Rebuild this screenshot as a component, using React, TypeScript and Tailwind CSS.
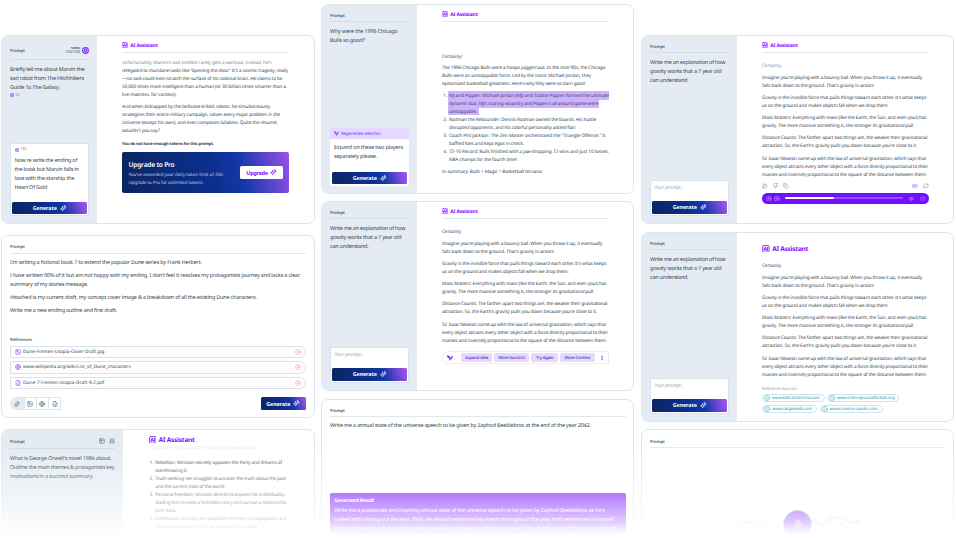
import React, { useLayoutEffect, useRef } from "react";
import {
  CircleX, Image as ImageIcon, Globe, FileDown, Paperclip, ThumbsUp, ThumbsDown, Copy, Volume2, RefreshCw,
  CirclePlay, CirclePause, PanelsTopLeft, SlidersVertical, Mic, Info, EllipsisVertical,
} from "lucide-react";

type Row = [string, number];

/* A single line of copy whose tracking is adjusted so that it fills a measure. */
function Fit({ t, w, className = "" }: { t: string; w: number; className?: string }) {
  const ref = useRef<HTMLSpanElement>(null);
  useLayoutEffect(() => {
    const el = ref.current;
    if (!el) return;
    el.style.letterSpacing = "0px";
    const natural = el.getBoundingClientRect().width;
    el.style.letterSpacing = `${(w - natural) / t.length}px`;
  }, [t, w]);
  return (
    <span ref={ref} className={`inline-block whitespace-nowrap ${className}`}>
      {t}
    </span>
  );
}

function Lines({ rows, className = "" }: { rows: Row[]; className?: string }) {
  return (
    <div className={className}>
      {rows.map(([t, w], i) => (
        <div key={i} className="flex h-[1lh] items-center">
          <Fit t={t} w={w} />
        </div>
      ))}
    </div>
  );
}

function Sparkle({ className = "" }: { className?: string }) {
  return (
    <svg viewBox="0 0 24 24" className={className} fill="none" stroke="currentColor" strokeWidth="2.4" strokeLinejoin="round" strokeLinecap="round">
      <path d="M9.5 6.5 11.4 12l5.6 2-5.6 2-1.9 5.5L7.6 16 2 14l5.6-2z" />
      <path d="M17 2v5M14.5 4.5h5M20.5 8v3.4M18.8 9.7h3.4" />
    </svg>
  );
}

function Wand({ className = "" }: { className?: string }) {
  return (
    <svg viewBox="0 0 24 24" className={className} fill="none" stroke="currentColor" strokeLinecap="round" strokeLinejoin="round">
      <path d="M2.5 3l6 2 1.5 6-6-2z" strokeWidth="3" fill="currentColor" />
      <path d="M9 10l2.5 11 2.5-6M12 12.5l8-4.5" strokeWidth="3.2" />
      <circle cx="20" cy="7.5" r="1.8" strokeWidth="2" />
      <circle cx="17.5" cy="15" r="1.2" strokeWidth="2" />
    </svg>
  );
}

function AiMark({ className = "" }: { className?: string }) {
  return (
    <svg viewBox="0 0 24 24" className={className} fill="none" stroke="currentColor" strokeWidth="2.2" strokeLinecap="round" strokeLinejoin="round">
      <rect x="1.5" y="1.5" width="21" height="21" rx="4" fill="#efe3ff" />
      <path d="M6 17l3.4-10h1.2L14 17M7.4 13.6h5.2M17.5 7v10" strokeWidth="2.5" />
    </svg>
  );
}

function TokenIcon({ className = "" }: { className?: string }) {
  return (
    <svg viewBox="0 0 24 24" className={className} fill="none" stroke="currentColor" strokeWidth="3.8">
      <circle cx="12" cy="12" r="9.8" />
      <rect x="8.5" y="8.5" width="7" height="7" rx="1.5" transform="rotate(45 12 12)" />
    </svg>
  );
}

function Generate({ className = "" }: { className?: string }) {
  return (
    <button
      className={`flex h-[12.5px] items-center justify-center gap-[3px] rounded-[1.5px] bg-[linear-gradient(70deg,#0b2560_0%,#0c2f8f_50%,#1238a8_68%,#9a52ea_96%)] text-[5.4px] leading-[8px] font-bold text-white ${className}`}
    >
      <Fit t="Generate" w={24} />
      <Sparkle className="size-[6.5px]" />
    </button>
  );
}

function Card({ className = "", children }: { className?: string; children: React.ReactNode }) {
  return <section className={`flex shrink-0 overflow-hidden rounded-[7px] border border-[#dce6ec] bg-white ${className}`}>{children}</section>;
}

function Label({ t = "Prompt", w = 14.5 }: { t?: string; w?: number }) {
  return (
    <div className="flex h-[6px] items-center pt-[2px] text-[4.2px] leading-[6px] font-semibold text-[#4a5c6c]">
      <Fit t={t} w={w} className="translate-y-[0.6px]" />
    </div>
  );
}

function Sidebar({ header, prompt, children, wide = false }: { header?: React.ReactNode; prompt: Row[]; children?: React.ReactNode; wide?: boolean }) {
  return (
    <aside className={`flex shrink-0 flex-col bg-[#e4ebf2] px-[8px] pb-[7px] ${wide ? "w-[121px]" : "w-[95px]"}`}>
      {header ?? (
        <div className="h-[17px] shrink-0 border-b border-[#d3dde6] pt-[7px]">
          <Label />
        </div>
      )}
      <Lines rows={prompt} className="mt-[4.5px] text-[5.4px] leading-[9px] text-[#33444f]" />
      {children}
    </aside>
  );
}

function EmptyPrompt() {
  return (
    <div className="mt-auto h-[36px] rounded-[2px] border border-[#d9e2ea] bg-white px-[1px] pt-[2.5px]">
      <div className="flex h-[9px] items-center pl-[2.5px] text-[5px] leading-[9px] text-[#9aabb8] italic">
        <Fit t="Your prompt..." w={29.5} />
      </div>
      <Generate className="mt-[8.5px] w-full" />
    </div>
  );
}

function Assistant() {
  return (
    <div className="flex h-[17px] shrink-0 items-start gap-[2.3px] border-b border-[#dfe8ee] pt-[6px] text-[#7a12ff]">
      <AiMark className="mt-[0.2px] size-[6px]" />
      <div className="flex h-[7px] items-center pt-[1px] text-[5px] leading-[7px] font-bold">
        <Fit t="AI Assistant" w={27.3} />
      </div>
    </div>
  );
}

function AssistantLarge({ className = "" }: { className?: string }) {
  return (
    <div className={`flex items-center gap-[2.6px] text-[#7a12ff] ${className}`}>
      <AiMark className="size-[7.6px]" />
      <div className="flex h-[9px] items-center text-[6.5px] leading-[9px] font-bold">
        <Fit t="AI Assistant" w={36} />
      </div>
    </div>
  );
}

const gravityPrompt: Row[] = [
  ["Write me an explanation of how", 75.3],
  ["gravity works that a 7 year old", 71.3],
  ["can understand.", 38.5],
];

const gravityParas: Row[][] = [
  [["Imagine you're playing with a bouncy ball. When you throw it up, it eventually", 160.3], ["falls back down to the ground. That's gravity in action!", 112]],
  [["Gravity is the invisible force that pulls things toward each other. It's what keeps", 164.3], ["us on the ground and makes objects fall when we drop them.", 126.7]],
  [["Mass Matters: Everything with mass (like the Earth, the Sun, and even you!) has", 164.5], ["gravity. The more massive something is, the stronger its gravitational pull.", 152.3]],
  [["Distance Counts: The farther apart two things are, the weaker their gravitational", 165.3], ["attraction. So, the Earth's gravity pulls you down because you're close to it.", 155]],
];
const newton: Row[] = [
  ["Sir Isaac Newton came up with the law of universal gravitation, which says that", 164],
  ["every object attracts every other object with a force directly proportional to their", 166],
  ["masses and inversely proportional to the square of the distance between them.", 164.7],
];

function Gravity({ className = "", faded = false }: { className?: string; faded?: boolean }) {
  return (
    <div className={`flex flex-col gap-[4px] text-[4.7px] leading-[8px] text-[#33444f] ${className}`}>
      <Lines rows={[["Certainly.", 19.7]]} className={faded ? "opacity-60" : ""} />
      {gravityParas.map((p, i) => (
        <Lines key={i} rows={p} />
      ))}
      <Lines rows={newton} className="mt-[1px]" />
    </div>
  );
}

function Item({ n, rows }: { n: number; rows: Row[] }) {
  return (
    <div className="flex">
      <span className="w-[5.7px] shrink-0">{n}.</span>
      <Lines rows={rows} />
    </div>
  );
}

function MarvinCard() {
  return (
    <Card className="h-[189px]">
      <Sidebar
        prompt={[["Briefly tell me about Marvin the", 74.5], ["sad robot from The Hitchhikers", 74], ["Guide To The Galaxy.", 49.7]]}
        header={
          <div className="flex h-[24px] shrink-0 justify-between border-b border-[#d3dde6] pt-[11px]">
            <Label />
            <div className="-mt-[1px] flex h-[8px] items-center gap-[2px]">
              <div className="flex flex-col items-end text-[#4a5c6c]">
                <span className="h-[4px] text-[2.7px] leading-[4px] font-bold"><Fit t="TOKENS" w={9.3} /></span>
                <span className="h-[5px] text-[4px] leading-[5px]"><Fit t="120/200" w={15.3} /></span>
              </div>
              <TokenIcon className="size-[7px] text-[#7f2af5]" />
            </div>
          </div>
        }
      >
        <div className="mt-[1px] flex h-[6px] items-center gap-[1px] text-[4px] leading-[6px] text-[#8998a5]">
          <TokenIcon className="size-[4.3px] text-[#8a3cf5]" />
          <Fit t="32" w={4.6} />
        </div>
        <div className="mt-auto flex h-[73px] flex-col rounded-[2px] border border-[#d9e2ea] bg-white px-[1px] pt-[3px]">
          <div className="flex h-[6px] items-center gap-[1.3px] pl-[2.6px] text-[4px] leading-[6px] text-[#f0527c]">
            <TokenIcon className="size-[4.3px] text-[#8a3cf5]" />
            <Fit t="184" w={6.6} />
          </div>
          <Lines
            rows={[["Now re write the ending of", 62.5], ["the book but Marvin falls in", 64], ["love with the starship the", 59.7], ["Heart Of Gold", 32.6]]}
            className="mt-[2.7px] pl-[2.6px] text-[5.4px] leading-[9px] text-[#33444f]"
          />
          <Generate className="mt-auto mb-[1px] w-full" />
        </div>
      </Sidebar>
      <main className="flex w-[192px] shrink-0 flex-col pl-[25px]">
        <Assistant />
        <div className="mt-[5.7px] text-[4.7px] leading-[8px] text-[#33444f]">
          <Lines rows={[["Unfortunately, Marvin's vast intellect rarely gets a workout; instead, he's", 149.3]]} className="opacity-65" />
          <Lines
            rows={[
              ["relegated to mundane tasks like “opening the door.” It's a cosmic tragedy, really", 166],
              ["—no task could even scratch the surface of his colossal brain. He claims to be", 160.3],
              ["50,000 times more intelligent than a human (or 30 billion times smarter than a", 164],
              ["live mattress, for context).", 54.5],
            ]}
          />
          <Lines
            className="mt-[4px]"
            rows={[
              ["And when kidnapped by the bellicose Krikkit robots, he simultaneously", 148],
              ["strategizes their entire military campaign, solves every major problem in the", 158],
              ["Universe (except his own), and even composes lullabies. Quite the résumé,", 155.7],
              ["wouldn't you say?", 38],
            ]}
          />
          <Lines className="mt-[5.5px] translate-y-[0.6px] text-[4.1px] font-bold" rows={[["You do not have enough tokens for this prompt.", 92]]} />
        </div>
        <div className="mt-[4px] flex h-[41px] items-center justify-between rounded-[2px] bg-[linear-gradient(75deg,#0b2560_0%,#0c2f8f_55%,#1238a8_70%,#9a52ea_100%)] pr-[6px] pl-[6.5px] text-white">
          <div className="pt-[1.2px]">
            <Lines className="text-[6.7px] leading-[10px] font-semibold" rows={[["Upgrade to Pro", 46]]} />
            <Lines className="mt-[1px] text-[4.6px] leading-[8px] text-[#c3cdea]" rows={[["You've exceeded your daily token limit of 200.", 95.3], ["Upgrade to Pro for unlimited tokens.", 75]]} />
          </div>
          <button className="flex h-[13px] w-[43px] items-center justify-center gap-[2.5px] rounded-[1.5px] bg-white text-[5.6px] leading-[8px] font-bold text-[#7a12ff]">
            <Fit t="Upgrade" w={21.5} />
            <Sparkle className="size-[6.5px]" />
          </button>
        </div>
      </main>
    </Card>
  );
}

function RefRow({ icon, t, w }: { icon: React.ReactNode; t: string; w: number }) {
  return (
    <div className="flex h-[12.6px] items-center rounded-l-[3px] rounded-r-full border border-[#d6e1ec] pr-[4px] pl-[3.5px] text-[4.7px] leading-[8px] text-[#33444f]">
      <span className="w-[8.6px] text-[#8a3cf5]">{icon}</span>
      <Fit t={t} w={w} />
      <CircleX className="ml-auto size-[6px] text-[#f58ba0]" />
    </div>
  );
}

function DuneCard() {
  const tool = "flex h-full w-[12.3px] items-center justify-center border-l border-[#dce6ee] bg-white";
  return (
    <Card className="h-[183px] flex-col px-[8px]">
      <div className="h-[18px] shrink-0 border-b border-[#e1e9ee] pt-[7px]">
        <Label />
      </div>
      <div className="flex flex-col gap-[4px] pt-[4px] text-[5.4px] leading-[9px] text-[#33444f]">
        <Lines rows={[["I'm writing a fictional book 7 to extend the popular Dune series by Frank Herbert.", 191.7]]} />
        <Lines rows={[["I have written 90% of it but am not happy with my ending, I don't feel it resolves my protagonists journey and lacks a clear", 290], ["summary of my stories message.", 78]]} />
        <Lines rows={[["Attached is my current draft, my concept cover image & a breakdown of all the existing Dune characters.", 246.7]]} />
        <Lines rows={[["Write me a new ending outline and first draft.", 107]]} />
      </div>
      <div className="mt-[20.5px]">
        <Label t="References" w={22} />
      </div>
      <div className="mt-[4px] flex flex-col gap-[3px]">
        <RefRow icon={<ImageIcon className="size-[6px]" />} t="Dune-Fremen-Utopia-Cover-Draft.jpg" w={81.3} />
        <RefRow icon={<Globe className="size-[6px]" />} t="www.wikipedia.org/wiki/List_of_Dune_characters" w={107.7} />
        <RefRow icon={<FileDown className="size-[6px]" />} t="Dune-7-Fremen-Utopia-Draft-9.2.pdf" w={81.3} />
      </div>
      <div className="mt-[8px] flex items-center justify-between">
        <div className="flex h-[12.5px] overflow-hidden rounded-l-full rounded-r-[3px] border border-[#dce6ee] text-[#4b6170]">
          <span className="flex h-full w-[12.5px] items-center justify-center bg-[#e4ebf2]"><Paperclip className="size-[6px]" /></span>
          <span className={tool}><ImageIcon className="size-[6px]" /></span>
          <span className={tool}><Globe className="size-[6px]" /></span>
          <span className={tool}><FileDown className="size-[6px]" /></span>
        </div>
        <Generate className="w-[45px]" />
      </div>
    </Card>
  );
}

function OrwellCard() {
  return (
    <Card className="h-[130px]">
      <Sidebar
        wide
        prompt={[["What is George Orwell's novel 1984 about.", 101.3], ["Outline the main themes & protagonists key", 104.3], ["motivations in a succinct summary.", 83.3]]}
        header={
          <div className="flex h-[19px] shrink-0 justify-between border-b border-[#d3dde6] pt-[8px]">
            <Label />
            <div className="flex gap-[4.5px] text-[#4b6170]">
              <PanelsTopLeft className="size-[6px]" />
              <SlidersVertical className="size-[6px]" />
            </div>
          </div>
        }
      />
      <main className="pl-[25.5px]">
        <AssistantLarge className="pt-[5px]" />
        <div className="h-[8px] overflow-hidden text-[4.6px] leading-[8px] text-[#33444f] opacity-10">
          <Fit t="• The government's pervasive monitoring represses citizens" w={107} />
        </div>
        <div className="mt-[6.5px] pl-[1px] text-[4.7px] leading-[8px] text-[#33444f]">
          <Item n={1} rows={[["Rebellion: Winston secretly opposes the Party and dreams of", 126.7], ["overthrowing it.", 32.3]]} />
          <Item n={2} rows={[["Truth-seeking: He struggles to uncover the truth about the past", 130.7], ["and the current state of the world.", 70]]} />
          <Item n={3} rows={[["Personal freedom: Winston desires to express his individuality,", 130], ["leading him to keep a forbidden diary and pursue a relationship", 131.3], ["with Julia.", 21]]} />
          <Item n={4} rows={[["Intellectual curiosity: He questions the Party's propaganda and", 131.3], ["seeks to understand the true nature of his society.", 103]]} />
        </div>
      </main>
    </Card>
  );
}

function BullsCard() {
  const mark = "flex w-fit items-center bg-[#cfb2ff] pl-[1.3px]";
  return (
    <Card className="h-[190px]">
      <Sidebar prompt={[["Why were the 1996 Chicago", 67.3], ["Bulls so good?", 34.8]]}>
        <div className="mt-auto flex h-[58px] flex-col overflow-hidden rounded-[2px] bg-white">
          <div className="flex h-[11px] shrink-0 items-center gap-[2px] bg-[#e4d9ff] pl-[4px] text-[4.5px] leading-[8px] text-[#8436ff]">
            <Wand className="size-[5px]" />
            <Fit t="Regenerate selection" w={39.5} />
          </div>
          <Lines rows={[["Expand on these two players", 69], ["separately please.", 43]]} className="mt-[4px] pl-[4px] text-[5.4px] leading-[9px] text-[#33444f]" />
          <div className="mt-auto px-[2px] pb-[2px]">
            <Generate className="w-full" />
          </div>
        </div>
      </Sidebar>
      <main className="w-[192px] shrink-0 pl-[25px]">
        <Assistant />
        <div className="pt-[30.5px] text-[4.7px] leading-[8px] text-[#33444f]">
          <Lines rows={[["Certainly!", 20.3]]} />
          <Lines
            className="mt-[3.8px]"
            rows={[
              ["The 1996 Chicago Bulls were a hoops juggernaut. In the mid-'90s, the Chicago", 163.3],
              ["Bulls were an unstoppable force. Led by the iconic Michael Jordan, they", 149],
              ["epitomized basketball greatness. Here's why they were so darn good:", 143.7],
            ]}
          />
          <div className="mt-[4px] pl-[1.3px]">
            <div className="flex">
              <span className="w-[4.4px] shrink-0">1.</span>
              <div className="-mt-[1.5px] pb-[1px]">
                <div className={`${mark} h-[9.5px] pt-[1.5px]`}><Fit t="MJ and Pippen: Michael Jordan (MJ) and Scottie Pippen formed the ultimate" w={160} /></div>
                <div className={`${mark} h-[8px] pr-[1px]`}><Fit t="dynamic duo. MJ's scoring wizardry and Pippen's all-around game were" w={149.3} /></div>
                <div className={`${mark} h-[7px] pr-[2px] pt-[1px]`}><Fit t="unstoppable." w={28} /></div>
              </div>
            </div>
            <Item n={2} rows={[["Rodman the Rebounder: Dennis Rodman owned the boards. His hustle", 147.3], ["disrupted opponents, and his colorful personality added flair.", 126.7]]} />
            <Item n={3} rows={[["Coach Phil Jackson: The Zen Master orchestrated the “Triangle Offense.” It", 156.3], ["baffled foes and kept egos in check.", 75]]} />
            <Item n={4} rows={[["72-10 Record: Bulls finished with a jaw-dropping 72 wins and just 10 losses.", 160], ["NBA champs for the fourth time!", 68]]} />
          </div>
          <Lines className="mt-[4px]" rows={[["In summary: Bulls + Magic = Basketball Nirvana.", 100.7]]} />
        </div>
      </main>
    </Card>
  );
}

function Chip({ t, w, className }: { t: string; w: number; className: string }) {
  return (
    <span className={`flex h-[8.6px] items-center justify-center rounded-[2px] bg-[#e4d9ff] text-[4.3px] leading-[8px] font-medium text-[#5a2bb8] ${className}`}>
      <Fit t={t} w={w} />
    </span>
  );
}

function GravityChipsCard() {
  return (
    <Card className="h-[190px]">
      <Sidebar prompt={gravityPrompt}>
        <EmptyPrompt />
      </Sidebar>
      <main className="w-[192px] shrink-0 pl-[25px]">
        <Assistant />
        <Gravity className="pt-[9px]" />
        <div className="mt-[6px] flex h-[13.4px] items-center rounded-l-full rounded-r-[2px] border border-[#efe8ff] pl-[4px]">
          <Wand className="size-[6px] text-[#7a12ff]" />
          <div className="ml-[8px] flex gap-[2px]">
            <Chip t="Expand idea" w={23} className="w-[31.3px]" />
            <Chip t="More Succinct" w={26.5} className="w-[35px]" />
            <Chip t="Try Again" w={17.5} className="w-[27px]" />
            <Chip t="More Context" w={26} className="w-[34.3px]" />
          </div>
          <EllipsisVertical className="ml-[4px] size-[6px] text-[#7a12ff]" />
        </div>
      </main>
    </Card>
  );
}

function SpeechCard() {
  return (
    <Card className="h-[160px] flex-col pr-[7.5px] pl-[8px]">
      <div className="h-[17px] shrink-0 border-b border-[#dfe8ec] pt-[7px]">
        <Label />
      </div>
      <Lines className="mt-[4.3px] text-[5.4px] leading-[9px] text-[#33444f]" rows={[["Write me a annual state of the universe speech to be given by Zaphod Beeblebrox at the end of the year 2042.", 260.7]]} />
      <div className="mt-[63px] h-[60px] shrink-0 rounded-[2px] bg-[#7510ff] pt-[3.7px] pl-[4.3px] text-white">
        <Lines className="text-[5px] leading-[8px] font-bold" rows={[["Generated Result", 39.7]]} />
        <Lines
          className="mt-[1.5px] text-[5.4px] leading-[9px]"
          rows={[
            ["Write me a passionate and inspiring annual state of the universe speech to be given by Zaphod Beeblebrox as he's", 270],
            ["tasked with closing out the year 2042. He should reference key events throughout the year, limit references to himself", 279.3],
            ["and how great he is & call out key ideas people should keep in mind to prosper in the coming year. Of course, he should", 281.7],
          ]}
        />
      </div>
    </Card>
  );
}

function GravityAudioCard() {
  return (
    <Card className="h-[189px]">
      <Sidebar prompt={gravityPrompt}>
        <EmptyPrompt />
      </Sidebar>
      <main className="w-[192px] shrink-0 pl-[25px]">
        <Assistant />
        <Gravity faded className="pt-[8.7px]" />
        <div className="mt-[4.3px] flex h-[6px] items-center justify-between text-[#7e909d]">
          <div className="flex gap-[5px]">
            <ThumbsUp className="size-[5.5px]" />
            <ThumbsDown className="size-[5.5px]" />
            <Copy className="size-[5.5px]" />
          </div>
          <div className="flex gap-[5px]">
            <Volume2 className="size-[5.8px] text-[#8a3cf5]" />
            <RefreshCw className="size-[5.8px]" />
          </div>
        </div>
        <div className="mt-[4px] flex h-[10.7px] items-center rounded-full bg-[#7010ff] pr-[4px] pl-[4px] text-[#e3d2ff]">
          <CirclePlay className="size-[5.5px]" />
          <CirclePause className="ml-[2.5px] size-[5.5px]" />
          <div className="ml-[5.5px] flex h-[2px] w-[118px] rounded-full bg-[#9250ff]">
            <div className="h-full w-[49px] rounded-full bg-white" />
          </div>
          <Volume2 className="ml-[5.5px] size-[5.5px]" />
          <CircleX className="ml-auto size-[5.5px] text-[#b98cff]" />
        </div>
      </main>
    </Card>
  );
}

function Source({ t, w, className }: { t: string; w: number; className: string }) {
  return (
    <span className={`flex h-[8px] items-center gap-[2px] rounded-full border border-[#cfe3ee] pl-[1px] text-[4.3px] leading-[6px] text-[#1c9dbb] ${className}`}>
      <Info className="size-[6px] shrink-0" />
      <Fit t={t} w={w} />
    </span>
  );
}

function GravitySourcesCard() {
  return (
    <Card className="h-[190px]">
      <Sidebar prompt={gravityPrompt}>
        <EmptyPrompt />
      </Sidebar>
      <main className="w-[192px] shrink-0 pl-[25px]">
        <AssistantLarge className="pt-[11.2px]" />
        <Gravity className="pt-[8.8px]" />
        <Lines className="mt-[7px] text-[4.2px] leading-[7px] text-[#94a3ae]" rows={[["Reference Sources", 34.3]]} />
        <div className="mt-[1.5px] flex gap-[2.3px]">
          <Source t="www.kids.britannica.com" w={47.5} className="w-[62.5px]" />
          <Source t="www.sciencejournalforkids.org" w={58} className="w-[72px]" />
        </div>
        <div className="mt-[2.2px] flex gap-[2.3px]">
          <Source t="www.natgeokids.com" w={40} className="w-[55.3px]" />
          <Source t="www.science-sparks.com" w={48} className="w-[63.3px]" />
        </div>
      </main>
    </Card>
  );
}

function VoiceCard() {
  return (
    <Card className="h-[130px] flex-col px-[8px]">
      <div className="h-[18px] shrink-0 border-b border-[#e6ecef] pt-[8px]">
        <Label />
      </div>
      <div className="mt-[63px] flex items-center justify-center">
        <svg viewBox="0 0 48 20" className="h-[20px] w-[48px]" fill="none" stroke="#c9baff" strokeWidth="0.6">
          <path d="M0 13c8-4 16-8 26-3 8 4 14 6 22-4" />
          <path d="M4 9c12 0 18 0 25 5 6 4 12 0 19-8" />
        </svg>
        <div className="flex size-[26.5px] items-center justify-center rounded-full bg-[#7510ff] ring-1 ring-[#8fa5c0]">
          <Mic className="size-[10px] text-white" strokeWidth={1.7} />
        </div>
        <svg viewBox="0 0 48 20" className="h-[20px] w-[48px]" fill="none" stroke="#a68cff" strokeWidth="0.6">
          <path d="M0 9c5-7 8-1 11 3 4 4 8-10 16-9 8 1 10 8 21 5" />
          <path d="M0 6c7 4 10 8 15 1 5-8 12-2 17 4 4 5 8-6 16-5" />
        </svg>
      </div>
    </Card>
  );
}

export default function App() {
  return (
    <div className="relative flex h-[540px] w-[956px] overflow-hidden bg-white pl-[1px] font-['Noto_Sans',sans-serif] [text-rendering:geometricPrecision]">
      <div className="flex w-[313.5px] shrink-0 flex-col gap-[11px] pt-[35px]">
        <MarvinCard />
        <DuneCard />
        <OrwellCard />
      </div>
      <div className="ml-[6.5px] flex w-[313px] shrink-0 flex-col pt-[4px]">
        <BullsCard />
        <div className="h-[7px] shrink-0" />
        <GravityChipsCard />
        <div className="h-[8px] shrink-0" />
        <SpeechCard />
      </div>
      <div className="ml-[7px] flex w-[313px] shrink-0 flex-col pt-[35px]">
        <GravityAudioCard />
        <div className="h-[8px] shrink-0" />
        <GravitySourcesCard />
        <div className="h-[7px] shrink-0" />
        <VoiceCard />
      </div>
      <div className="pointer-events-none absolute inset-x-0 bottom-0 h-[110px] bg-[linear-gradient(to_bottom,rgb(255_255_255/0)_14%,rgb(255_255_255/0.45)_58%,rgb(255_255_255/0.76)_82%,#fff_95%)]" />
    </div>
  );
}
